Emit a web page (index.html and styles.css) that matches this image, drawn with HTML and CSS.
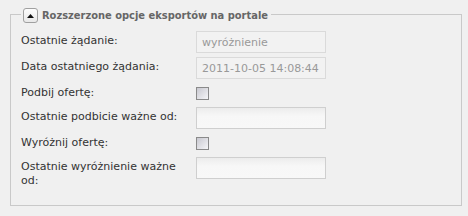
FILE: index.html
```html
<!DOCTYPE html>
<html lang="pl">
<head>
<meta charset="utf-8">
<link rel="stylesheet" href="styles.css">
</head>
<body>
<fieldset class="panel">
  <legend class="panel-legend">
    <span class="toggle"><svg width="7" height="4" viewBox="0 0 7 4"><polygon points="0,4 7,4 3.5,0" fill="#111"/></svg></span>
    <span class="legend-text">Rozszerzone opcje eksportów na portale</span>
  </legend>
  <div class="row">
    <label class="lbl">Ostatnie żądanie:</label>
    <div class="field"><input class="txt" type="text" value="wyróżnienie" disabled></div>
  </div>
  <div class="row">
    <label class="lbl">Data ostatniego żądania:</label>
    <div class="field"><input class="txt" type="text" value="2011-10-05 14:08:44" disabled></div>
  </div>
  <div class="row row-check">
    <label class="lbl">Podbij ofertę:</label>
    <div class="field"><span class="chk"></span></div>
  </div>
  <div class="row">
    <label class="lbl">Ostatnie podbicie ważne od:</label>
    <div class="field"><input class="txt edit" type="text" value=""></div>
  </div>
  <div class="row row-check">
    <label class="lbl">Wyróżnij ofertę:</label>
    <div class="field"><span class="chk"></span></div>
  </div>
  <div class="row">
    <label class="lbl">Ostatnie wyróżnienie ważne od:</label>
    <div class="field"><input class="txt edit" type="text" value=""></div>
  </div>
</fieldset>
</body>
</html>
```
FILE: styles.css
```css
html, body {
  margin: 0;
  padding: 0;
  background: #f0f0f0;
}
body {
  font-family: "DejaVu Sans", sans-serif;
  font-size: 11px;
  color: #333;
}
.panel {
  box-sizing: border-box;
  width: 452px;
  margin: 5px 0 0 10px;
  padding: 0 10px 0 10px;
  height: 201px;
  border: 1px solid #c9c9c9;
  display: flex;
  flex-direction: column;
  gap: 4px;
}
.panel-legend {
  padding: 3px 3px 0 2px;
  display: flex;
  align-items: center;
  gap: 4px;
  margin-bottom: 8px;
}
.toggle {
  box-sizing: border-box;
  width: 15px;
  height: 15px;
  border: 1px solid #a0a0a0;
  border-radius: 3px;
  background: linear-gradient(#fdfdfd, #e8e8e8);
  display: flex;
  align-items: center;
  justify-content: center;
}
.legend-text {
  font-weight: bold;
  font-stretch: condensed;
  color: #666;
  font-size: 11px;
}
.row {
  display: grid;
  grid-template-columns: 175px 1fr;
  align-items: start;
  min-height: 22px;
}
.row-check {
  min-height: 20px;
}
.lbl {
  padding-top: 3px;
  line-height: 14px;
  padding-right: 5px;
}
.field {
  display: flex;
  align-items: center;
  height: 22px;
}
.row-check .field {
  height: 20px;
}
.txt {
  box-sizing: border-box;
  width: 130px;
  height: 22px;
  margin: 0;
  padding: 0 5px;
  border: 1px solid #dadada;
  background: #f2f2f2;
  font-family: "DejaVu Sans", sans-serif;
  font-size: 11px;
  color: #999;
  outline: none;
}
.txt.edit {
  border: 1px solid #cfcfcf;
  background: linear-gradient(#ececec, #f7f7f7 40%, #f8f8f8);
}
.chk {
  box-sizing: border-box;
  width: 13px;
  height: 13px;
  border: 1px solid #8a8a8a;
  background: linear-gradient(135deg, #c8c8d0, #f6f6f8);
  display: block;
}
```
